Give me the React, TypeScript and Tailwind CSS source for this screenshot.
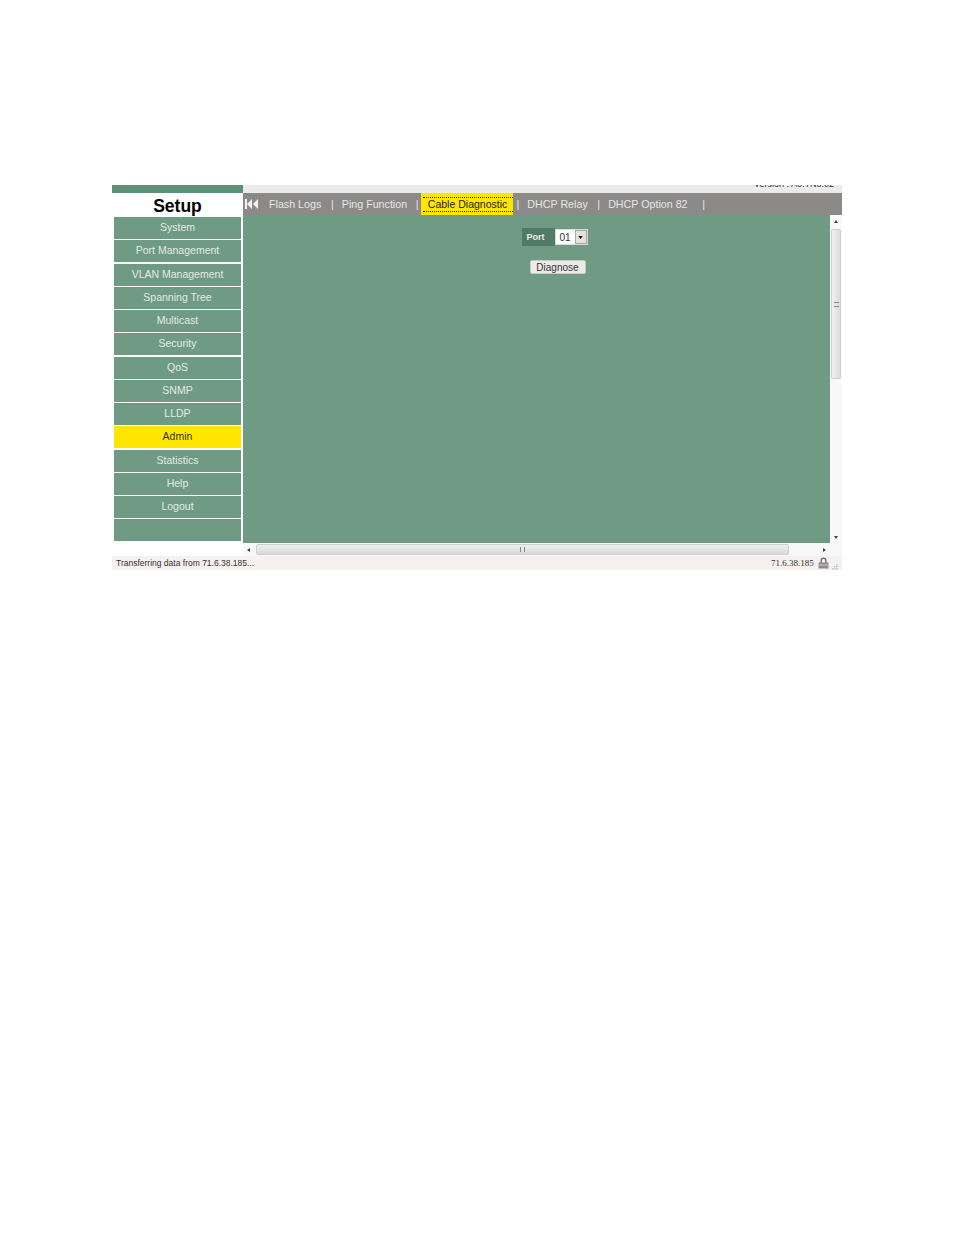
const menu = ["System", "Port Management", "VLAN Management", "Spanning Tree", "Multicast", "Security", "QoS", "SNMP", "LLDP", "Admin", "Statistics", "Help", "Logout", ""];

const App = () => {
  return (
    <div className="min-h-[1235px] bg-white pt-[185px] pl-[112px] font-['Liberation_Sans',Arial,sans-serif]">
      <div className="w-[730px]">
        <div className="flex">
          {/* Sidebar */}
          <div className="w-[131px] shrink-0 bg-white">
            <div className="h-[8px] bg-[#5f8f78]" />
            <div className="h-[24px] pt-[1px] text-center text-[17.5px] leading-[24px] font-bold text-black">Setup</div>
            <div className="flex flex-col gap-[1.25px] px-[2px]">
              {menu.map((item) => (
                <div
                  key={item}
                  className={
                    item === "Admin"
                      ? "h-[22px] bg-[#ffe600] text-center text-[10.5px] leading-[21px] text-[#333300]"
                      : "h-[22px] bg-[#6f9a84] text-center text-[10.5px] leading-[21px] text-[#e3ebe3]"
                  }
                >
                  {item}
                </div>
              ))}
            </div>
          </div>

          {/* Right side */}
          <div className="flex-1">
            <div className="flex h-[8px] justify-end overflow-hidden bg-[#ebebeb] pr-[8px]">
              <span className="mt-[-7px] text-[9px] leading-[12px] whitespace-nowrap text-[#333333]">Version : A0.TN0.02</span>
            </div>

            {/* Tabs */}
            <div className="flex h-[22px] items-center bg-[#8b8a88] text-[10.7px] whitespace-nowrap text-[#e6e6e6]">
              <svg className="ml-[2px] h-[12px] w-[14px] shrink-0" viewBox="0 0 14 12" fill="#f2f2f2">
                <rect x="0" y="1" width="2" height="10" />
                <path d="M7 1v10L2 6zM13 1v10L8 6z" />
              </svg>
              <span className="ml-[10px] w-[53px]">Flash Logs</span>
              <span className="ml-[9px]">|</span>
              <span className="ml-[8px] w-[65px]">Ping Function</span>
              <span className="ml-[9px]">|</span>
              <div className="ml-[2px] flex h-[22px] w-[92px] items-center bg-[#ffe600] pl-[2px] text-[10.5px] text-[#222200]">
                <span className="w-full border-y border-dotted border-[#2222cc] text-center leading-[13px]">Cable Diagnostic</span>
              </div>
              <span className="ml-[4px]">|</span>
              <span className="ml-[8px] w-[61px]">DHCP Relay</span>
              <span className="ml-[9px]">|</span>
              <span className="ml-[8px] w-[80px]">DHCP Option 82</span>
              <span className="ml-[14px]">|</span>
            </div>

            <div className="flex h-[328px]">
              {/* Main panel */}
              <div className="flex flex-1 flex-col items-center bg-[#6f9a84] pt-[13px] pl-[36px]">
                <div className="flex h-[18px] items-center">
                  <div className="h-[18px] w-[33px] bg-[#527b67] pl-[5px] text-[9px] leading-[18px] font-bold text-[#e6eee8]">Port</div>
                  <div className="flex h-[16px] w-[33px] items-center justify-between border border-[#d8d8d8] bg-white pl-[4px] text-[10px] text-[#333333]">
                    01
                    <div className="flex h-[14px] w-[12px] items-center justify-center border border-[#a8a8a8] bg-[#e4e0dc]">
                      <svg className="h-[3px] w-[5px]" viewBox="0 0 6 4" fill="#111111">
                        <path d="M0 0h6L3 4z" />
                      </svg>
                    </div>
                  </div>
                </div>
                <button className="mt-[14px] ml-[6px] h-[14px] w-[56px] rounded-[2px] border border-[#c8c8c8] bg-[#ecebe8] text-center text-[10px] leading-[13px] text-[#333340]">
                  Diagnose
                </button>
              </div>

              {/* Vertical scrollbar */}
              <div className="flex w-[12px] shrink-0 flex-col items-center bg-[#f8f8f8]">
                <span className="mt-[5px] h-0 w-0 border-x-[2px] border-b-[3px] border-x-transparent border-b-[#444444]" />
                <div className="mt-[6px] flex h-[150px] w-[10px] items-center justify-center rounded-[2px] border border-[#cfcfcf] bg-gradient-to-r from-[#f0f0f0] to-[#dcdcdc]">
                  <span className="h-[5px] w-[5px] border-y border-[#888888]" />
                </div>
                <span className="mt-[157px] h-0 w-0 border-x-[2px] border-t-[3px] border-x-transparent border-t-[#444444]" />
              </div>
            </div>

            {/* Horizontal scrollbar */}
            <div className="flex h-[13px] items-center bg-[#f8f8f8]">
              <span className="ml-[4px] h-0 w-0 border-y-[2px] border-r-[3px] border-y-transparent border-r-[#444444]" />
              <div className="ml-[6px] flex h-[11px] w-[533px] items-center justify-center rounded-[2px] border border-[#cfcfcf] bg-gradient-to-b from-[#f0f0f0] to-[#d8d8d8]">
                <span className="h-[5px] w-[5px] border-x border-[#888888]" />
              </div>
              <span className="ml-[34px] h-0 w-0 border-y-[2px] border-l-[3px] border-y-transparent border-l-[#444444]" />
            </div>
          </div>
        </div>

        {/* Status bar */}
        <div className="flex h-[14px] items-center bg-[#f6f0ef] text-[8.5px] leading-[14px] whitespace-nowrap text-[#333333]">
          <span className="ml-[4px] w-[655px]">Transferring data from 71.6.38.185...</span>
          <span className="w-[47px] font-['Liberation_Serif',serif] text-[9px]">71.6.38.185</span>
          <svg className="h-[12px] w-[11px] shrink-0" viewBox="0 0 11 12">
            <path d="M3.2 6V3.5a2.3 2.3 0 0 1 4.6 0V6" fill="none" stroke="#777777" strokeWidth="1.5" />
            <rect x="0.5" y="5.5" width="10" height="6" fill="#8c8c8c" />
            <rect x="0.5" y="7.5" width="10" height="1" fill="#d0d0d0" />
          </svg>
          <svg className="mt-[7px] ml-[3px] h-[6px] w-[6px] shrink-0" viewBox="0 0 6 6" fill="#c4c4c4">
            <rect x="4" y="0" width="1.5" height="1.5" />
            <rect x="2" y="2" width="1.5" height="1.5" />
            <rect x="4" y="2" width="1.5" height="1.5" />
            <rect x="0" y="4" width="1.5" height="1.5" />
            <rect x="2" y="4" width="1.5" height="1.5" />
            <rect x="4" y="4" width="1.5" height="1.5" />
          </svg>
        </div>
      </div>
    </div>
  );
};

export default App;
